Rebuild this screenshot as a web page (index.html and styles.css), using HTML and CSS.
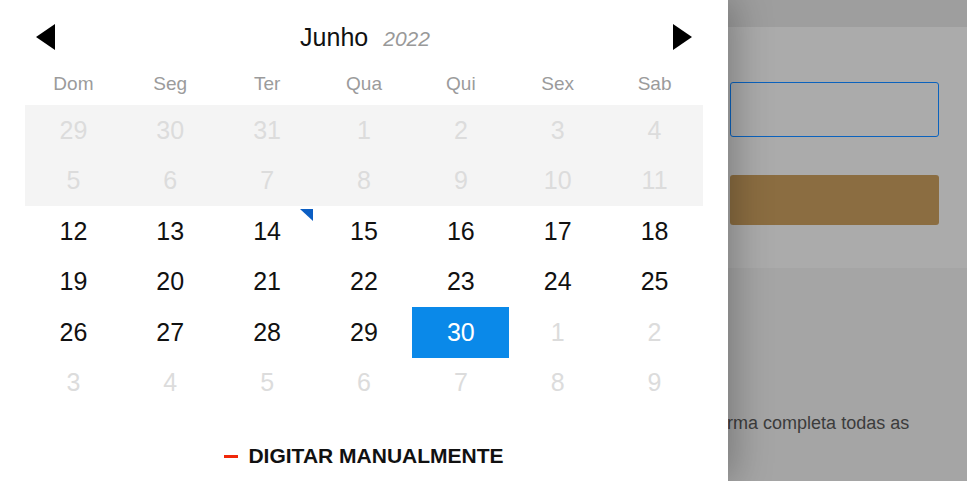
FILE: index.html
```html
<!DOCTYPE html>
<html lang="pt-BR">
<head>
<meta charset="utf-8">
<title>Calendário</title>
<link rel="stylesheet" href="styles.css">
</head>
<body>
<div class="page">
  <div class="topbar"></div>
  <div class="card">
    <div class="field"></div>
    <div class="btn"></div>
  </div>
  <p class="note">Preencha de forma completa todas as</p>
</div>

<aside class="drawer">
  <header class="cal-head">
    <button class="nav" aria-label="Anterior">
      <svg width="19" height="26" viewBox="0 0 19 26"><polygon points="19,0 19,26 0,13" fill="#000"/></svg>
    </button>
    <div class="title"><span class="month">Junho</span><span class="year">2022</span></div>
    <button class="nav" aria-label="Próximo">
      <svg width="19" height="26" viewBox="0 0 19 26"><polygon points="0,0 0,26 19,13" fill="#000"/></svg>
    </button>
  </header>
  <div class="weekdays">
    <span>Dom</span><span>Seg</span><span>Ter</span><span>Qua</span><span>Qui</span><span>Sex</span><span>Sab</span>
  </div>
  <div class="days">
    <span class="d past">29</span><span class="d past">30</span><span class="d past">31</span><span class="d past">1</span><span class="d past">2</span><span class="d past">3</span><span class="d past">4</span>
    <span class="d past">5</span><span class="d past">6</span><span class="d past">7</span><span class="d past">8</span><span class="d past">9</span><span class="d past">10</span><span class="d past">11</span>
    <span class="d">12</span><span class="d">13</span><span class="d today">14</span><span class="d">15</span><span class="d">16</span><span class="d">17</span><span class="d">18</span>
    <span class="d">19</span><span class="d">20</span><span class="d">21</span><span class="d">22</span><span class="d">23</span><span class="d">24</span><span class="d">25</span>
    <span class="d">26</span><span class="d">27</span><span class="d">28</span><span class="d">29</span><span class="d selected">30</span><span class="d off">1</span><span class="d off">2</span>
    <span class="d off">3</span><span class="d off">4</span><span class="d off">5</span><span class="d off">6</span><span class="d off">7</span><span class="d off">8</span><span class="d off">9</span>
  </div>
  <footer class="cal-foot">
    <span class="dash"></span><span class="manual">DIGITAR MANUALMENTE</span>
  </footer>
</aside>
</body>
</html>
```

FILE: styles.css
```css
html, body {
  margin: 0;
  padding: 0;
}
body {
  width: 967px;
  height: 481px;
  overflow: hidden;
  position: relative;
  background: #a5a5a5;
  font-family: "Liberation Sans", Arial, sans-serif;
}

/* background page (dimmed) */
.page {
  display: flex;
  flex-direction: column;
}
.topbar {
  height: 27px;
  background: #9e9e9e;
}
.card {
  height: 241px;
  box-sizing: border-box;
  background: #ababab;
  padding: 55px 28px 0 730px;
  display: flex;
  flex-direction: column;
}
.field {
  height: 55px;
  box-sizing: border-box;
  border: 1px solid #0b62bd;
  border-radius: 3px;
}
.btn {
  margin-top: 38px;
  height: 50px;
  background: #8b6d41;
  border-radius: 3px;
}
.note {
  margin: 144px 0 0 605px;
  font-size: 18px;
  line-height: 22px;
  color: #3c3c3c;
  white-space: nowrap;
}

/* calendar drawer */
.drawer {
  position: absolute;
  top: 0;
  left: 0;
  width: 728px;
  height: 481px;
  background: #fff;
  box-shadow: 6px 0 36px rgba(0, 0, 0, 0.28);
  display: flex;
  flex-direction: column;
}
.cal-head {
  height: 50px;
  margin-top: 12px;
  padding: 0 36px;
  display: flex;
  align-items: center;
  justify-content: space-between;
}
.nav {
  border: 0;
  background: none;
  padding: 0;
  width: 19px;
  height: 26px;
  display: flex;
}
.title {
  display: flex;
  align-items: baseline;
  gap: 15px;
  padding-left: 2px;
}
.month {
  font-size: 25px;
  color: #111;
}
.year {
  font-size: 21px;
  font-style: italic;
  color: #999;
}
.weekdays {
  height: 43px;
  margin: 0 25px;
  display: grid;
  grid-template-columns: repeat(7, 1fr);
  align-items: center;
  justify-items: center;
  font-size: 19px;
  color: #9b9b9b;
}
.days {
  margin: 0 25px;
  display: grid;
  grid-template-columns: repeat(7, 1fr);
  grid-auto-rows: 50.5px;
}
.d {
  display: flex;
  align-items: center;
  justify-content: center;
  font-size: 25px;
  color: #111;
  position: relative;
}
.d.past {
  background: #f4f4f4;
  color: #dcdcdc;
}
.d.off {
  color: #dcdcdc;
}
.d.selected {
  background: #0a89e9;
  color: #fff;
}
.d.today::after {
  content: "";
  position: absolute;
  top: 3px;
  right: 3px;
  width: 0;
  height: 0;
  border-top: 12px solid #0b5ec3;
  border-left: 13px solid transparent;
}
.cal-foot {
  padding-top: 36px;
  display: flex;
  align-items: center;
  justify-content: center;
  gap: 10px;
  height: 24px;
}
.dash {
  width: 14px;
  height: 3px;
  background: #f0280a;
}
.manual {
  font-size: 21px;
  font-weight: bold;
  line-height: 24px;
  color: #111;
}
```
